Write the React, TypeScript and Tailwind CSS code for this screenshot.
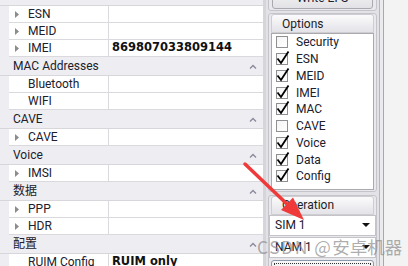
import type { ReactNode } from 'react';

type GridItem =
  | { kind: 'hdr'; label: string }
  | { kind: 'row'; label: string; arrow?: boolean; value?: string };

const items: GridItem[] = [
  { kind: 'hdr', label: 'Serial Numbers' },
  { kind: 'row', label: 'ESN', arrow: true },
  { kind: 'row', label: 'MEID', arrow: true },
  { kind: 'row', label: 'IMEI', arrow: true, value: '869807033809144' },
  { kind: 'hdr', label: 'MAC Addresses' },
  { kind: 'row', label: 'Bluetooth' },
  { kind: 'row', label: 'WIFI' },
  { kind: 'hdr', label: 'CAVE' },
  { kind: 'row', label: 'CAVE', arrow: true },
  { kind: 'hdr', label: 'Voice' },
  { kind: 'row', label: 'IMSI', arrow: true },
  { kind: 'hdr', label: '数据' },
  { kind: 'row', label: 'PPP', arrow: true },
  { kind: 'row', label: 'HDR', arrow: true },
  { kind: 'hdr', label: '配置' },
  { kind: 'row', label: 'RUIM Config', value: 'RUIM only' },
];

const options: [string, boolean][] = [
  ['Security', false],
  ['ESN', true],
  ['MEID', true],
  ['IMEI', true],
  ['MAC', true],
  ['CAVE', false],
  ['Voice', true],
  ['Data', true],
  ['Config', true],
];

const Caret = () => (
  <svg width="8" height="5" viewBox="0 0 8 5" className="shrink-0">
    <path d="M1 4.5 L4 1.5 L7 4.5" fill="none" stroke="#8a8a9c" strokeWidth="1.4" />
  </svg>
);

const GridHeader = ({ label }: { label: string }) => (
  <div className="flex h-[19px] items-center justify-between border-b border-[#d6d6db] bg-[#eeeef2] pl-[13px] pr-[6px]">
    <span>{label}</span>
    <Caret />
  </div>
);

const GridRow = ({ label, arrow, value }: { label: string; arrow?: boolean; value?: string }) => (
  <div className="flex h-[17px]">
    <div className="w-[9px] shrink-0 bg-[#eeeef2]" />
    <div className="flex w-[100px] shrink-0 items-center border-b border-r border-[#dadade] bg-white">
      <span className="w-[19px] pl-[6px]">
        {arrow && (
          <svg width="4" height="7" viewBox="0 0 4 7">
            <path d="M0 0 L4 3.5 L0 7 Z" fill="#8c8c8c" />
          </svg>
        )}
      </span>
      <span>{label}</span>
    </div>
    <div className="flex flex-1 items-center border-b border-[#dadade] bg-white pl-[3px] font-['DejaVu_Sans',sans-serif] text-[11.5px] font-bold text-[#111]">
      {value}
    </div>
  </div>
);

const Check = ({ on }: { on: boolean }) => (
  <div className="relative h-[12px] w-[12px] shrink-0 border border-[#8f8f94] bg-gradient-to-br from-[#f4f4f4] to-white">
    {on && (
      <svg width="14" height="15" viewBox="0 0 14 15" className="absolute left-[-1px] top-[-4px]">
        <path d="M1.5 8.5 L5 13 L12.5 1.5" fill="none" stroke="#000" strokeWidth="1.8" />
      </svg>
    )}
  </div>
);

const GroupHead = ({ children }: { children: ReactNode }) => (
  <div className="mx-[2px] flex h-[19px] items-center rounded-t-[3px] border border-[#cdcdd2] bg-gradient-to-b from-[#fbfbfc] to-[#e3e3e8] pl-[10px] text-[#222]">
    {children}
  </div>
);

const Combo = ({ label }: { label: string }) => (
  <div className="flex h-[21px] items-center justify-between border border-[#c3c3c8] bg-white pl-[5px] pr-[5px]">
    <span>{label}</span>
    <svg width="8" height="4" viewBox="0 0 8 4">
      <path d="M0 0 L8 0 L4 4 Z" fill="#111" />
    </svg>
  </div>
);

export default function App() {
  return (
    <div className="relative flex h-[266px] w-[408px] overflow-hidden bg-[#f3f3f4] font-['Roboto','Noto_Sans_CJK_SC',sans-serif] text-[12px] text-[#20202c]">
      <div className="w-[263px] shrink-0 bg-white">
        <div className="-mt-[13px]">
          {items.map((it, i) =>
            it.kind === 'hdr' ? (
              <GridHeader key={i} label={it.label} />
            ) : (
              <GridRow key={i} label={it.label} arrow={it.arrow} value={it.value} />
            ),
          )}
        </div>
      </div>
      <div className="w-[3px] shrink-0 bg-[#d5d5da]" />

      <div className="flex w-[113px] shrink-0 flex-col gap-[2px] bg-[#e2e2e7] px-[2px]">
        <div className="-mt-[16px] rounded-[3px] border border-[#c4c4ca] bg-[#e9e9ed] px-[3px] pb-[1px] pt-[2px]">
          <div className="flex h-[22px] items-start justify-center rounded-[3px] border border-[#a9a9b0] bg-gradient-to-b from-[#f8f8f9] to-[#e2e2e6] pt-[1px]">
            Write EFS
          </div>
        </div>

        <div className="rounded-[3px] border border-[#c4c4ca] bg-[#e9e9ed] pb-[1px]">
          <GroupHead>Options</GroupHead>
          <div className="mx-[2px] flex flex-col border border-[#a9a9ae] bg-white pb-[4px] pl-[4px] pt-[0px]">
            {options.map(([label, on]) => (
              <div key={label} className="flex h-[16.75px] items-center gap-[8px]">
                <Check on={on} />
                <span>{label}</span>
              </div>
            ))}
          </div>
        </div>

        <div className="mt-[1px] rounded-[3px] border border-[#c4c4ca] bg-[#e9e9ed]">
          <GroupHead>Operation</GroupHead>
          <div className="flex flex-col gap-[1px]">
            <Combo label="SIM 1" />
            <Combo label="NAM 1" />
            <div className="mx-[2px] mt-[1px] rounded-[3px] border border-[#8d9aae] bg-gradient-to-b from-[#f8f8f9] to-[#e2e2e6] p-[2px]">
              <div className="flex h-[18px] items-start justify-center border border-dotted border-[#333] pt-[1px]">
                Read
              </div>
            </div>
          </div>
        </div>
      </div>

      <div className="w-[1px] shrink-0 bg-[#b7b7bc]" />
      <div className="w-[3px] shrink-0 bg-[#ebebee]" />
      <div className="w-[1px] shrink-0 bg-[#a8a8ad]" />
      <div className="flex-1 bg-[#f3f3f4]" />

      <svg width="408" height="266" className="pointer-events-none absolute left-0 top-0">
        <line x1="245" y1="164" x2="288" y2="205" stroke="#f03a3a" strokeWidth="3.5" strokeLinecap="round" />
        <polygon points="304,220 281,210 293,197.5" fill="#f03a3a" />
      </svg>

      <div className="pointer-events-none absolute left-[257px] top-[236px] whitespace-nowrap font-['Noto_Sans_CJK_SC',sans-serif] text-[17.5px] leading-[22px] text-[#8a8a8a]/70">
        <span className="tracking-[1.5px]">CSDN @</span>安卓机器
      </div>
    </div>
  );
}
